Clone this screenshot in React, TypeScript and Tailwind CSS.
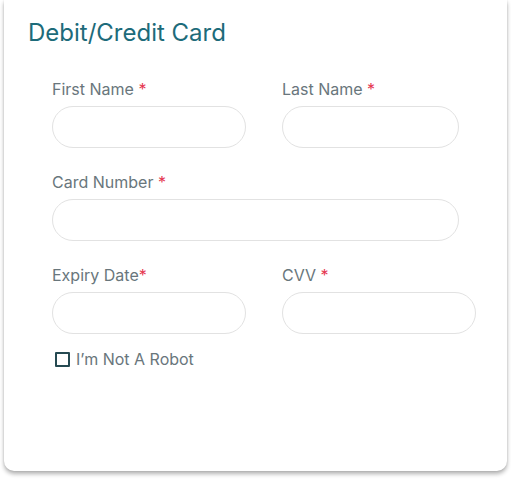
import React from "react";

function Label({ text, gap = true }: { text: string; gap?: boolean }) {
  return (
    <div className="h-6 leading-6 text-[16px] text-[#69767c] mb-[5px]">
      {text}
      {gap ? " " : ""}
      <span className="text-[#e5364f]">*</span>
    </div>
  );
}

function Input({ w }: { w: string }) {
  return <div className={`h-[42px] rounded-full border border-[#e2e2e2] bg-white ${w}`} />;
}

export default function App() {
  return (
    <div className="bg-white w-[511px] h-[480px]" style={{ fontFamily: "Inter, 'Noto Sans', sans-serif" }}>
      <div className="ml-[4px] w-[503px] h-[471px] bg-white rounded-b-[10px] shadow-[0_3px_4px_rgba(0,0,0,0.3),0_0_2px_rgba(0,0,0,0.12)] pt-[17px] pl-[24px]">
        <h1 className="h-8 leading-8 text-[24px] text-[#1d6b7a]">Debit/Credit Card</h1>
        <div className="pl-[24px] pt-[28px]">
          <div className="flex gap-[36px] mb-[22px]">
            <div className="w-[194px]">
              <Label text="First Name" />
              <Input w="w-[194px]" />
            </div>
            <div>
              <Label text="Last Name" />
              <Input w="w-[177px]" />
            </div>
          </div>
          <div className="mb-[22px]">
            <Label text="Card Number" />
            <Input w="w-[407px]" />
          </div>
          <div className="flex gap-[36px] mb-[13px]">
            <div className="w-[194px]">
              <Label text="Expiry Date" gap={false} />
              <Input w="w-[194px]" />
            </div>
            <div>
              <Label text="CVV" />
              <Input w="w-[194px]" />
            </div>
          </div>
          <div className="flex items-center h-6 pl-[3px]">
            <div className="w-[15px] h-[15px] border-2 border-[#264a52] rounded-[1px]" />
            <span className="ml-[6px] text-[16px] leading-6 text-[#69767c]">I’m Not A Robot</span>
          </div>
        </div>
      </div>
    </div>
  );
}
